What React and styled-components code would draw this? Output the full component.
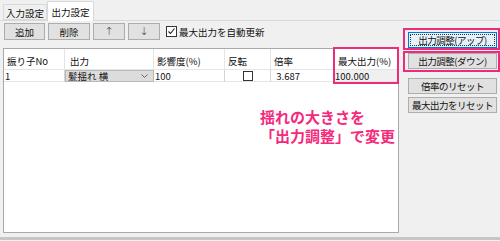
import React from "react";
import styled, { createGlobalStyle } from "styled-components";

const GlobalStyle = createGlobalStyle`
  html, body {
    margin: 0;
    padding: 0;
    background: #f0f0f0;
  }
  #root {
    width: 500px;
    height: 241px;
    overflow: hidden;
  }
  * {
    box-sizing: border-box;
  }
`;

const PINK = "#ee2a7b";

const Window = styled.div`
  width: 500px;
  height: 241px;
  display: flex;
  flex-direction: column;
  font-family: "Noto Sans CJK JP", "Noto Sans", sans-serif;
  font-size: 9.5px;
  line-height: 12px;
  color: #111;
  background: #f0f0f0;
`;

const TabStrip = styled.div`
  height: 21px;
  display: flex;
  align-items: flex-end;
  padding-left: 3px;
  border-bottom: 1px solid #d9d9d9;
`;

const Tab = styled.div`
  height: ${(p) => (p.active ? "20px" : "16px")};
  width: ${(p) => (p.active ? "47px" : "44px")};
  margin-bottom: ${(p) => (p.active ? "-1px" : "0")};
  display: flex;
  align-items: center;
  justify-content: center;
  background: ${(p) => (p.active ? "#ffffff" : "#f0f0f0")};
  border: 1px solid #d9d9d9;
  border-bottom: ${(p) => (p.active ? "none" : "1px solid #d9d9d9")};
  padding-top: ${(p) => (p.active ? "0" : "1px")};
`;

const Panel = styled.div`
  flex: 1;
  display: flex;
  flex-direction: column;
`;

const Body = styled.div`
  flex: 1;
  display: flex;
`;

const LeftColumn = styled.div`
  width: 400px;
  padding: 2px 0 0 3px;
  display: flex;
  flex-direction: column;
`;

const Toolbar = styled.div`
  height: 17px;
  display: flex;
  align-items: center;
  gap: 3px;
  padding-left: 1px;
`;

const ToolButton = styled.div`
  width: ${(p) => p.w}px;
  height: 17px;
  display: flex;
  align-items: center;
  justify-content: center;
  background: #e1e1e1;
  border: 1px solid #adadad;
  color: ${(p) => (p.arrow ? "#444" : "#111")};
  font-family: ${(p) => (p.arrow ? '"DejaVu Sans", sans-serif' : "inherit")};
  font-size: ${(p) => (p.arrow ? "11px" : "inherit")};
  font-weight: ${(p) => (p.arrow ? 300 : 400)};
`;

const CheckLabel = styled.label`
  display: flex;
  align-items: center;
  gap: 2px;
  margin-left: 3px;
`;

const CheckBox = styled.span`
  width: ${(p) => p.size}px;
  height: ${(p) => p.size}px;
  display: inline-flex;
  align-items: center;
  justify-content: center;
  background: #fff;
  border: 1px solid #333;
`;

const TableBox = styled.div`
  position: relative;
  margin-top: 8px;
  width: 396px;
  height: 185px;
  background: #fff;
  border: 1px solid #a9a9a9;
`;

const Grid = styled.div`
  display: grid;
  grid-template-columns: 61px 89px 71px 46px 63px 1fr;
`;

const HeadCell = styled.div`
  height: 21px;
  padding: 6px 0 0 ${(p) => p.pad || 3}px;
  line-height: 12px;
  border-right: 1px solid #e5e5e5;
  border-bottom: 1px solid #e5e5e5;
  white-space: nowrap;
  &:last-child {
    border-right: none;
  }
`;

const Cell = styled.div`
  height: 12px;
  line-height: 12px;
  padding-left: 1px;
  display: flex;
  align-items: center;
  justify-content: ${(p) => (p.center ? "center" : "flex-start")};
  background: ${(p) => p.bg || "#fff"};
  border-right: 1px solid #d4d4d4;
  border-bottom: 1px solid #e5e5e5;
  white-space: nowrap;
`;

const Combo = styled(Cell)`
  background: #dcdcdc;
  border: 1px solid #b8b8b8;
  justify-content: space-between;
  padding: 0 5px 0 2px;
`;

const ColumnMark = styled.div`
  position: absolute;
  left: 329px;
  top: -2px;
  width: 66px;
  height: 37px;
  border: 2px solid ${PINK};
  pointer-events: none;
`;

const Note = styled.div`
  position: absolute;
  left: 256px;
  top: 58px;
  color: #f5287c;
  font-weight: 700;
  font-size: 15px;
  line-height: 19px;
  white-space: nowrap;
`;

const RightColumn = styled.div`
  flex: 1;
  padding: 7px 0 0 3px;
  display: flex;
  flex-direction: column;
`;

const Mark = styled.div`
  border: 2px solid ${PINK};
  padding: ${(p) => (p.first ? "2px 1px 0 3px" : "0 1px 1px 3px")};
  margin-bottom: 1px;
`;

const SideButton = styled.div`
  width: 89px;
  height: 16px;
  display: flex;
  align-items: center;
  justify-content: center;
  font-size: 9.5px;
  letter-spacing: -0.5px;
  white-space: nowrap;
  background: ${(p) => (p.focused ? "#e5f1fb" : "#e1e1e1")};
  border: 1px solid ${(p) => (p.focused ? "#0078d7" : "#adadad")};
  outline: ${(p) => (p.focused ? "1px dotted #333" : "none")};
  outline-offset: -3px;
  margin-left: ${(p) => (p.plain ? "5px" : "0")};
  margin-top: ${(p) => p.mt || 0}px;
`;

const Footer = styled.div`
  height: 8px;
  padding-top: 4px;
`;

const FooterBar = styled.div`
  height: 3px;
  background: #c6c6c6;
`;

function Check({ size, checked }) {
  return (
    <CheckBox size={size}>
      {checked && (
        <svg width="9" height="9" viewBox="0 0 9 9">
          <path d="M1.5 4.5 L3.5 6.5 L7.5 1.5" fill="none" stroke="#222" strokeWidth="1.1" />
        </svg>
      )}
    </CheckBox>
  );
}

export default function App() {
  return (
    <>
      <GlobalStyle />
      <Window>
        <TabStrip>
          <Tab>入力設定</Tab>
          <Tab active>出力設定</Tab>
        </TabStrip>
        <Panel>
          <Body>
            <LeftColumn>
              <Toolbar>
                <ToolButton w={41}>追加</ToolButton>
                <ToolButton w={42}>削除</ToolButton>
                <ToolButton w={32} arrow>↑</ToolButton>
                <ToolButton w={32} arrow>↓</ToolButton>
                <CheckLabel>
                  <Check size={11} checked />
                  最大出力を自動更新
                </CheckLabel>
              </Toolbar>
              <TableBox>
                <Grid>
                  <HeadCell>振り子No</HeadCell>
                  <HeadCell pad={5}>出力</HeadCell>
                  <HeadCell>影響度(%)</HeadCell>
                  <HeadCell>反転</HeadCell>
                  <HeadCell>倍率</HeadCell>
                  <HeadCell pad={4}>最大出力(%)</HeadCell>
                  <Cell>1</Cell>
                  <Combo>
                    <span>髪揺れ 横</span>
                    <svg width="7" height="4" viewBox="0 0 7 4">
                      <path d="M0.5 0.5 L3.5 3.5 L6.5 0.5" fill="none" stroke="#666" strokeWidth="1" />
                    </svg>
                  </Combo>
                  <Cell>100</Cell>
                  <Cell center>
                    <Check size={10} />
                  </Cell>
                  <Cell>&nbsp;&nbsp;3.687</Cell>
                  <Cell bg="#f0f0f0">100.000</Cell>
                </Grid>
                <ColumnMark />
                <Note>
                  揺れの大きさを
                  <br />
                  「出力調整」で変更
                </Note>
              </TableBox>
            </LeftColumn>
            <RightColumn>
              <Mark first>
                <SideButton focused>出力調整(アップ)</SideButton>
              </Mark>
              <Mark>
                <SideButton>出力調整(ダウン)</SideButton>
              </Mark>
              <SideButton plain mt={5}>倍率のリセット</SideButton>
              <SideButton plain mt={3}>最大出力をリセット</SideButton>
            </RightColumn>
          </Body>
          <Footer>
            <FooterBar />
          </Footer>
        </Panel>
      </Window>
    </>
  );
}
